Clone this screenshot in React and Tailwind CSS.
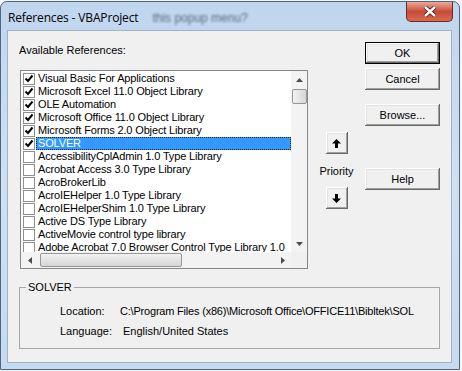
import React from "react";

const refs = [
  { name: "Visual Basic For Applications", on: true },
  { name: "Microsoft Excel 11.0 Object Library", on: true },
  { name: "OLE Automation", on: true },
  { name: "Microsoft Office 11.0 Object Library", on: true },
  { name: "Microsoft Forms 2.0 Object Library", on: true },
  { name: "SOLVER", on: true, selected: true },
  { name: "AccessibilityCplAdmin 1.0 Type Library" },
  { name: "Acrobat Access 3.0 Type Library" },
  { name: "AcroBrokerLib" },
  { name: "AcroIEHelper 1.0 Type Library" },
  { name: "AcroIEHelperShim 1.0 Type Library" },
  { name: "Active DS Type Library" },
  { name: "ActiveMovie control type library" },
  { name: "Adobe Acrobat 7.0 Browser Control Type Library 1.0" },
];

const classic =
  "bg-[#f0f0f0] shadow-[inset_-1px_-1px_#696969,inset_1px_1px_#ffffff,inset_-2px_-2px_#a0a0a0,inset_2px_2px_#e3e3e3]";

function Button({ children, primary }) {
  return (
    <div
      className={
        "flex h-[22px] w-[75px] items-center justify-center " +
        (primary ? "border border-black " : "") +
        classic
      }
    >
      {children}
    </div>
  );
}

function Check({ on }) {
  return (
    <div className="flex h-[12px] w-[12px] shrink-0 items-center justify-center border border-[#8e8f8f] bg-white">
      {on ? (
        <svg width="10" height="10" viewBox="0 0 10 10">
          <path d="M1.5 4.5 L4 7 L8.5 1.5" stroke="#000" strokeWidth="2" fill="none" />
        </svg>
      ) : null}
    </div>
  );
}

function Tri({ dir }) {
  const pts = {
    up: "0,4 3.5,0 7,4",
    down: "0,0 7,0 3.5,4",
    left: "4,0 4,7 0,3.5",
    right: "0,0 4,3.5 0,7",
  }[dir];
  const vert = dir === "up" || dir === "down";
  return (
    <svg width={vert ? 7 : 4} height={vert ? 4 : 7} viewBox={vert ? "0 0 7 4" : "0 0 4 7"}>
      <polygon points={pts} fill="#4d4d4d" />
    </svg>
  );
}

function Arrow({ up }) {
  return (
    <div className={"flex h-[22px] w-[22px] items-center justify-center " + classic}>
      <svg width="9" height="9" viewBox="0 0 9 9" className={up ? "" : "rotate-180"}>
        <polygon points="4.5,0 9,4.5 6,4.5 6,9 3,9 3,4.5 0,4.5" fill="#000" />
      </svg>
    </div>
  );
}

export default function App() {
  return (
    <div
      className="h-[371px] w-[462px] overflow-hidden bg-[#f4f7fb] text-[11px] leading-[13px] text-black"
      style={{ fontFamily: '"Liberation Sans", Arial, sans-serif' }}
    >
      <div className="mt-[1px] flex h-[369px] w-[460px] flex-col rounded-t-[7px] border border-[#4f6580] bg-gradient-to-b from-[#c0d6ee] via-[#cfe0f3] to-[#c6daf0]">
        {/* title bar */}
        <div className="flex h-[28px] items-start">
          <div
            className="mt-[9px] pl-[7px] text-[12px] leading-[14px] tracking-[-0.15px] text-black"
            style={{ fontFamily: '"Open Sans", "Liberation Sans", sans-serif' }}
          >
            References - VBAProject
          </div>
          <div className="ml-[14px] mt-[9px] text-[12px] leading-[14px] text-[#3f4d5e] opacity-80 blur-[1.2px]">
            this popup menu?
          </div>
          <div className="ml-auto mr-[6px] flex h-[20px] w-[47px] items-center justify-center rounded-b-[5px] border border-t-0 border-[#6b2a20] bg-gradient-to-b from-[#e9a99b] via-[#c94a36] to-[#d66a52]">
            <svg width="14" height="11" viewBox="0 0 14 11">
              <path d="M2 1 L12 10 M12 1 L2 10" stroke="#3a1410" strokeWidth="4" />
              <path d="M2 1 L12 10 M12 1 L2 10" stroke="#fff" strokeWidth="2.4" />
            </svg>
          </div>
        </div>

        {/* client */}
        <div className="ml-[6px] h-[333px] w-[445px] border border-[#9fb2c8] bg-[#f0f0f0]">
          <div className="flex pt-[11px]">
            {/* list column */}
            <div className="pl-[12px]">
              <div className="-ml-[1px] mt-[2px] h-[14px]">Available References:</div>
              <div className="mt-[12px] h-[199px] w-[288px] border border-[#828790] bg-white">
                <div className="flex h-[181px]">
                  <div className="w-[270px] overflow-hidden pt-[1px] tracking-[-0.15px]">
                    {refs.map((r) => (
                      <div key={r.name} className="flex h-[13px] items-center pl-[2px]">
                        <Check on={r.on} />
                        <div
                          className={
                            "ml-[1px] h-[13px] flex-1 whitespace-nowrap pl-[2px] " +
                            (r.selected
                              ? "bg-[#3399ff] text-white outline-1 outline-offset-[-1px] outline-dotted outline-[#222]"
                              : "")
                          }
                        >
                          {r.name}
                        </div>
                      </div>
                    ))}
                  </div>
                  <div className="flex w-[16px] flex-col items-center bg-[#f3f3f3]">
                    <div className="flex h-[17px] items-center justify-center">
                      <Tri dir="up" />
                    </div>
                    <div className="mt-[1px] h-[15px] w-[15px] rounded-[2px] border border-[#979797] bg-gradient-to-r from-[#f2f2f2] to-[#d6d6d6]" />
                    <div className="mt-auto flex h-[17px] items-center justify-center">
                      <Tri dir="down" />
                    </div>
                  </div>
                </div>
                <div className="flex h-[16px]">
                  <div className="flex w-[270px] items-center bg-[#f3f3f3]">
                    <div className="flex w-[17px] justify-center">
                      <Tri dir="left" />
                    </div>
                    <div className="ml-[2px] h-[14px] w-[142px] rounded-[2px] border border-[#979797] bg-gradient-to-b from-[#f2f2f2] to-[#d6d6d6]" />
                    <div className="ml-auto flex w-[17px] justify-center">
                      <Tri dir="right" />
                    </div>
                  </div>
                  <div className="w-[16px] bg-[#f0f0f0]" />
                </div>
              </div>
            </div>

            {/* priority column */}
            <div className="flex w-[57px] flex-col items-center">
              <div className="mt-[90px]">
                <Arrow up />
              </div>
              <div className="mt-[11px] h-[13px]">Priority</div>
              <div className="mt-[9px]">
                <Arrow />
              </div>
            </div>

            {/* buttons column */}
            <div className="flex flex-col">
              <Button primary>OK</Button>
              <div className="mt-[4px]">
                <Button>Cancel</Button>
              </div>
              <div className="mt-[14px]">
                <Button>Browse...</Button>
              </div>
              <div className="mt-[42px]">
                <Button>Help</Button>
              </div>
            </div>
          </div>

          {/* info group */}
          <fieldset className="ml-[11px] mt-[12px] w-[421px] border border-[#a8a8a8] pb-[10px]">
            <legend className="ml-[6px] px-[2px] leading-[13px]">SOLVER</legend>
            <div className="flex pl-[40px] pt-[11px]">
              <div className="w-[60px]">Location:</div>
              <div className="whitespace-nowrap tracking-[-0.2px]">
                C:\Program Files (x86)\Microsoft Office\OFFICE11\Bibltek\SOL
              </div>
            </div>
            <div className="mt-[7px] flex pl-[40px]">
              <div className="w-[63px]">Language:</div>
              <div>English/United States</div>
            </div>
          </fieldset>
        </div>
      </div>
    </div>
  );
}
